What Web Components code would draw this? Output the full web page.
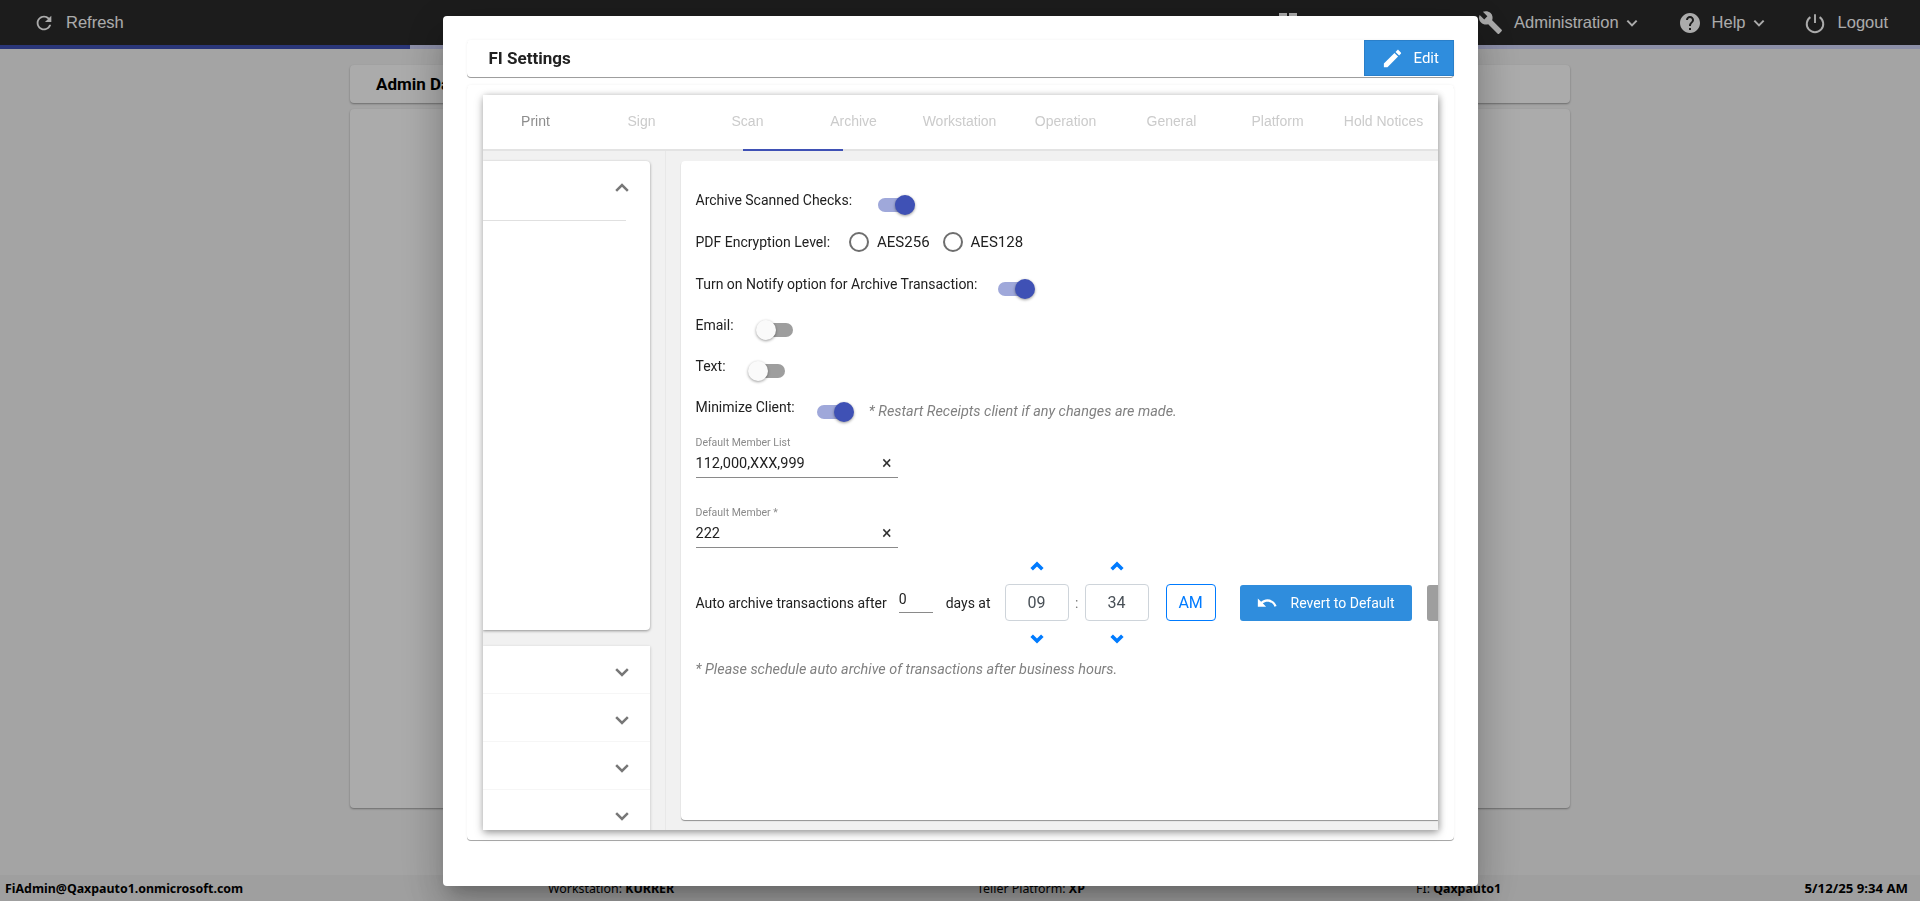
<!DOCTYPE html>
<html lang="en">
<head>
<meta charset="utf-8">
<title>FI Settings</title>
<style>
  html,body{margin:0;height:100%;overflow:hidden}
  body{font-family:Roboto,"Liberation Sans",Arial,sans-serif;background:#f5f5f5}
</style>
</head>
<body>
<app-shell>
  <app-topbar slot="top"></app-topbar>
  <admin-page slot="main"></admin-page>
  <app-footer slot="bottom"></app-footer>
</app-shell>

<fi-settings-dialog>
  <settings-tabs>
    <archive-sidebar slot="side"></archive-sidebar>
    <archive-form slot="main"></archive-form>
  </settings-tabs>
</fi-settings-dialog>

<script>
(() => {
  const ICONS = {
    refresh: `<path d="M17.65 6.35C16.2 4.9 14.21 4 12 4c-4.42 0-7.99 3.58-7.99 8s3.57 8 7.99 8c3.73 0 6.84-2.55 7.73-6h-2.08c-.82 2.33-3.04 4-5.65 4-3.31 0-6-2.69-6-6s2.69-6 6-6c1.66 0 3.14.69 4.22 1.78L13 11h7V4l-2.35 2.35z"/>`,
    wrench: `<path d="M22.7 19l-9.1-9.1c.9-2.3.4-5-1.5-6.9-2-2-5-2.4-7.4-1.3L9 6 6 9 1.6 4.7C.4 7.1.9 10.1 2.9 12.1c1.9 1.9 4.6 2.4 6.9 1.5l9.1 9.1c.4.4 1 .4 1.4 0l2.3-2.3c.5-.4.5-1.1.1-1.4z"/>`,
    help: `<path d="M12 2C6.48 2 2 6.48 2 12s4.48 10 10 10 10-4.48 10-10S17.52 2 12 2zm1 17h-2v-2h2v2zm2.07-7.75l-.9.92C13.45 12.9 13 13.5 13 15h-2v-.5c0-1.1.45-2.1 1.17-2.83l1.24-1.26c.37-.36.59-.86.59-1.41 0-1.1-.9-2-2-2s-2 .9-2 2H8c0-2.21 1.79-4 4-4s4 1.79 4 4c0 .88-.36 1.68-.93 2.25z"/>`,
    power: `<path d="M12 2.5v9.5M17 5.6a9 9 0 1 1-10 0" fill="none" stroke="currentColor" stroke-width="2.1"/>`,
    edit: `<path d="M3 17.25V21h3.75L17.81 9.94l-3.75-3.75L3 17.25zM20.71 7.04c.39-.39.39-1.02 0-1.41l-2.34-2.34c-.39-.39-1.02-.39-1.41 0l-1.83 1.83 3.75 3.75 1.83-1.83z"/>`,
    undo: `<path d="M12.5 8c-2.65 0-5.05.99-6.9 2.6L2 7v9h9l-3.62-3.62c1.39-1.16 3.16-1.88 5.12-1.88 3.54 0 6.55 2.31 7.6 5.5l2.37-.78C21.08 11.03 17.15 8 12.5 8z"/>`,
    down: `<path d="M5 8.5l7 7 7-7" fill="none" stroke="currentColor" stroke-width="3"/>`,
    up: `<path d="M5 15.5l7-7 7 7" fill="none" stroke="currentColor" stroke-width="3"/>`,
    spinUp: `<path d="M4 17l8-8 8 8" fill="none" stroke="currentColor" stroke-width="5.4"/>`,
    spinDown: `<path d="M4 7l8 8 8-8" fill="none" stroke="currentColor" stroke-width="5.4"/>`,
  };
  const icon = (name, w, h = w) => `<svg width="${w}" height="${h}" viewBox="0 0 24 24" fill="currentColor" aria-hidden="true" style="display:block;flex:none">${ICONS[name]}</svg>`;

  // most of these only have fixed markup, so one small base class is enough
  const define = (tag, render) => {
    customElements.define(tag, class extends HTMLElement {
      connectedCallback() {
        if (this.shadowRoot) return;
        this.attachShadow({ mode: "open" }).innerHTML = render(this);
      }
    });
  };

  define("app-shell", () => `
    <style>
      :host{display:flex;flex-direction:column;height:100vh}
      .main{flex:1;min-height:0}
    </style>
    <slot name="top"></slot>
    <div class="main"><slot name="main"></slot></div>
    <slot name="bottom"></slot>`);

  define("app-topbar", () => `
    <style>
      :host{display:block;font-size:16.5px;color:#fff}
      .bar{height:45px;background:#2a2a2a;display:flex;align-items:center;padding:0 32px 0 33px;font-family:"Liberation Sans",Arial,sans-serif}
      .item{display:flex;align-items:center}
      .spacer{flex:1}
      .grid{width:18px;height:18px;margin:-1px 181px 0 0;display:grid;grid-template-columns:1fr 1fr;gap:2px;color:#fff}
      .grid i{background:currentColor}
      .chev{margin-left:5px}
      .progress{height:4px;background:#d1d5fa}
      .progress div{width:410px;height:100%;background:#3f51b5}
    </style>
    <div class="bar">
      <div class="item" style="gap:11px">${icon("refresh", 22)}<span>Refresh</span></div>
      <div class="spacer"></div>
      <div class="grid"><i></i><i></i><i></i><i></i></div>
      <div class="item" style="gap:11px;margin-right:38px">${icon("wrench", 25)}<span>Administration</span><span class="chev" style="margin-left:-6px">${icon("down", 16)}</span></div>
      <div class="item" style="gap:10px;margin-right:37px">${icon("help", 24)}<span>Help</span><span class="chev" style="margin-left:-5px">${icon("down", 16)}</span></div>
      <div class="item" style="gap:12px">${icon("power", 22)}<span>Logout</span></div>
    </div>
    <div class="progress"><div></div></div>`);

  define("admin-page", () => `
    <style>
      :host{display:flex;flex-direction:column;gap:6px;height:100%;box-sizing:border-box;padding:16px 350px 67px}
      .card{background:#fff;border-radius:4px;box-shadow:0 1px 2px rgba(0,0,0,.35)}
      .title{height:38px;display:flex;align-items:center;padding-left:26px;font:700 17px Roboto,Arial,sans-serif;color:#000}
      .body{flex:1}
    </style>
    <div class="card title">Admin Dashboard</div>
    <div class="card body"></div>`);

  define("app-footer", () => `
    <style>
      :host{display:grid;grid-template-columns:543px 429px 439px 1fr auto;height:26px;align-items:center;padding:0 12px 0 5px;background:#ededed;font:12.4px "Noto Sans","Open Sans",Arial,sans-serif;color:#000}
      b{font-weight:700}
      .date{font-size:13.2px}
    </style>
    <b>FiAdmin@Qaxpauto1.onmicrosoft.com</b>
    <span>Workstation: <b>KURRER</b></span>
    <span>Teller Platform: <b>XP</b></span>
    <span>FI: <b>Qaxpauto1</b></span>
    <b class="date">5/12/25 9:34 AM</b>`);

  define("fi-settings-dialog", () => `
    <style>
      :host{position:fixed;inset:0;display:flex;justify-content:center;align-items:flex-start;padding-top:16px;box-sizing:border-box;background:rgba(0,0,0,.33)}
      .modal{width:1035px;height:870px;box-sizing:border-box;padding:24px 24px 0 24px;background:#fff;border-radius:4px;
        box-shadow:0 11px 15px -7px rgba(0,0,0,.2),0 24px 38px 3px rgba(0,0,0,.14),0 9px 46px 8px rgba(0,0,0,.12)}
      .head{height:37px;display:flex;align-items:flex-start;justify-content:space-between;border-radius:4px;box-shadow:0 1px 0 #9e9e9e,0 0 3px rgba(0,0,0,.06)}
      h2{margin:0;padding-left:22px;font:700 17px/36px Roboto,Arial,sans-serif;color:#212121}
      button{width:90px;height:36px;display:flex;align-items:center;gap:10px;padding:0 0 0 16px;box-sizing:border-box;border:1px solid #2a7fc9;background:#2f8ddd;color:#fff;font:15px Roboto,Arial,sans-serif}
      .content{height:755px;margin-top:8px;box-sizing:border-box;padding:10px 16px 10px 16px;border-radius:4px;box-shadow:0 1px 0 #a8a8a8,0 0 3px rgba(0,0,0,.06)}
    </style>
    <div class="modal">
      <div class="head"><h2>FI Settings</h2><button>${icon("edit", 23)}<span>Edit</span></button></div>
      <div class="content"><slot></slot></div>
    </div>`);

  define("settings-tabs", () => {
    const names = ["Print", "Sign", "Scan", "Archive", "Workstation", "Operation", "General", "Platform", "Hold Notices"];
    const tabs = names.map((n, i) => `<div class="tab${i === 0 ? " first" : ""}">${n}</div>`).join("");
    return `
      <style>
        :host{display:block;height:100%;background:#fff;box-shadow:0 3px 8px rgba(0,0,0,.35),2px 0 6px rgba(0,0,0,.14)}
        .tabs{position:relative;height:54px;display:grid;grid-template-columns:repeat(9,106px);border-bottom:2px solid #e3e3e3;font:14px "Liberation Sans",Arial,sans-serif;color:#cbcbcb}
        .tab{display:flex;align-items:center;justify-content:center;padding-bottom:2px}
        .first{color:#8d8d8d}
        .ink{position:absolute;left:260px;bottom:-2px;width:100px;height:2px;background:#3f51b5}
        .body{height:679px;background:#f1f1f1;display:flex;overflow:hidden}
        .side{width:167px;flex:none;padding-top:10px;box-sizing:border-box}
        .rule{width:1px;flex:none;margin-left:15px;background:#e8e8e8}
        .main{flex:1;min-width:0;margin:10px 0 10px 15px}
      </style>
      <div class="tabs">${tabs}<div class="ink"></div></div>
      <div class="body">
        <div class="side"><slot name="side"></slot></div>
        <div class="rule"></div>
        <div class="main"><slot name="main"></slot></div>
      </div>`;
  });

  define("archive-sidebar", () => {
    const rows = [0, 1, 2, 3].map(() => `<div class="row">${icon("down", 20)}</div>`).join("");
    return `
      <style>
        :host{display:block;color:#777}
        .open{height:469px;background:#fff;border-radius:0 4px 4px 0;box-shadow:0 1px 3px rgba(0,0,0,.4)}
        .top{height:60px;box-sizing:border-box;margin-right:24px;border-bottom:1px solid #e0e0e0;display:flex;justify-content:flex-end;padding:17px 0 0 0}
        .top svg{margin-right:-6px}
        .rows{margin-top:16px;background:#fff;box-shadow:0 1px 3px rgba(0,0,0,.22)}
        .row{height:48px;box-sizing:border-box;display:flex;justify-content:flex-end;align-items:center;padding:4px 18px 0 0;border-bottom:1px solid #f6f6f6}
      </style>
      <div class="open"><div class="top">${icon("up", 20)}</div></div>
      <div class="rows">${rows}</div>`;
  });

  define("md-toggle", (el) => {
    const on = el.hasAttribute("on");
    return `
      <style>
        :host{display:flex;width:37px;height:20px;margin-top:3px;flex:none;align-items:center;position:relative}
        .track{height:14px;border-radius:7px;box-sizing:border-box;background:${on ? "#9fa8da" : "#9e9e9e"};${on ? "width:32px" : "width:33px;margin-left:4px"}}
        .thumb{position:absolute;top:0;${on ? "right:0" : "left:0"};width:20px;height:20px;border-radius:50%;background:${on ? "#3f51b5" : "#fafafa"};box-shadow:0 1px 3px rgba(0,0,0,.4)}
      </style>
      <div class="track"></div><div class="thumb"></div>`;
  });

  define("md-radio", (el) => `
    <style>
      :host{display:flex;align-items:center;gap:8px;font-size:15px;color:#212121}
      i{width:20px;height:20px;box-sizing:border-box;border:2px solid #6e6e6e;border-radius:50%}
    </style>
    <i></i><span>${el.getAttribute("label")}</span>`);

  define("md-field", (el) => `
    <style>
      :host{display:block;width:202px}
      label{display:block;font-size:10.5px;line-height:12px;color:#8a8a8a}
      .input{display:flex;align-items:center;justify-content:space-between;height:20px;margin-top:4px;padding:0 6px 4px 0;border-bottom:1px solid #8a8a8a;font-size:14.5px;color:#212121}
      .x{font-size:18px;line-height:20px;color:#333}
    </style>
    <label>${el.getAttribute("label")}</label>
    <div class="input"><span>${el.getAttribute("value")}</span><span class="x">×</span></div>`);

  define("time-spinner", (el) => `
    <style>
      :host{display:flex;flex:none;flex-direction:column;align-items:center;gap:12px;width:64px;color:#007bff}
      svg{margin:-2px 0}
      .box{width:64px;height:37px;box-sizing:border-box;display:flex;align-items:center;justify-content:center;border:1px solid #ced4da;border-radius:4px;color:#495057;font-size:16px}
    </style>
    ${icon("spinUp", 16)}<div class="box">${el.getAttribute("value")}</div>${icon("spinDown", 16)}`);

  define("archive-form", () => `
    <style>
      :host{display:block;height:100%;box-sizing:border-box;padding:31px 0 0 15px;background:#fff;border-radius:4px 0 0 4px;box-shadow:0 1px 1px rgba(0,0,0,.4);overflow:hidden;font-size:14px;color:#212121}
      .row{display:flex;align-items:flex-start;line-height:16px;white-space:nowrap}
      .note{font-style:italic;font-size:14.4px;color:#808080}
      .time{display:flex;align-items:center;height:85px;margin-top:12px;white-space:nowrap}
      .time > *{flex:none}
      .days{width:34px;box-sizing:border-box;height:28px;padding-top:4px;line-height:20px;margin:-8px 13px 0 12px;border-bottom:1px solid #8a8a8a}
      .colon{width:16px;text-align:center;color:#777}
      .am{width:50px;height:37px;box-sizing:border-box;margin-left:17px;display:flex;align-items:center;justify-content:center;border:1px solid #007bff;border-radius:4px;color:#007bff;font-size:16px}
      .revert{width:172px;height:36px;margin-left:24px;display:flex;align-items:center;gap:13px;box-sizing:border-box;padding:0 0 0 16px;border:0;border-radius:3px;background:#2f8ddd;color:#fff;font:14px Roboto,Arial,sans-serif}
      .more{width:40px;height:36px;margin-left:15px;border:0;border-radius:3px;background:#9e9e9e}
    </style>
    <div class="row" style="gap:26px">Archive Scanned Checks:<md-toggle on></md-toggle></div>
    <div class="row" style="align-items:center;margin-top:17px;height:20px">PDF Encryption Level:
      <md-radio label="AES256" style="margin-left:19px"></md-radio>
      <md-radio label="AES128" style="margin-left:13px"></md-radio>
    </div>
    <div class="row" style="gap:20px;margin-top:24px">Turn on Notify option for Archive Transaction:<md-toggle on></md-toggle></div>
    <div class="row" style="gap:22px;margin-top:18px">Email:<md-toggle></md-toggle></div>
    <div class="row" style="gap:22px;margin-top:18px">Text:<md-toggle></md-toggle></div>
    <div class="row" style="gap:22px;margin-top:18px">Minimize Client:<md-toggle on></md-toggle>
      <span class="note" style="margin:5px 0 0 -7px">* Restart Receipts client if any changes are made.</span></div>
    <md-field label="Default Member List" value="112,000,XXX,999" style="margin-top:15px"></md-field>
    <md-field label="Default Member *" value="222" style="margin-top:29px"></md-field>
    <div class="time">
      <span>Auto archive transactions after</span>
      <span class="days">0</span>
      <span style="margin-right:14px">days at</span>
      <time-spinner value="09"></time-spinner>
      <span class="colon">:</span>
      <time-spinner value="34"></time-spinner>
      <div class="am">AM</div>
      <button class="revert">${icon("undo", 22)}<span>Revert to Default</span></button>
      <button class="more" aria-label="More"></button>
    </div>
    <div class="row note" style="margin-top:17px">* Please schedule auto archive of transactions after business hours.</div>`);
})();
</script>
</body>
</html>
